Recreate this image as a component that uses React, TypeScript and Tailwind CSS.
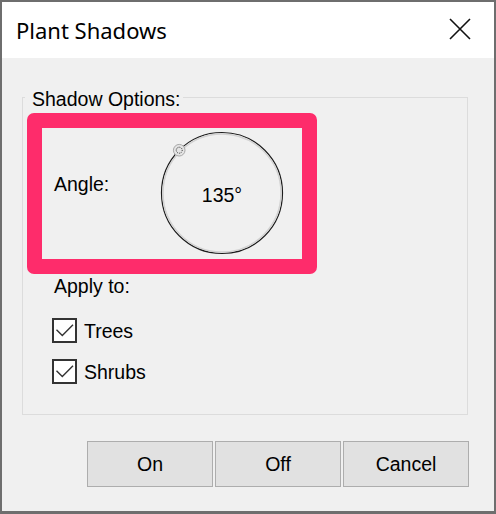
import { useState } from 'react';

const Check = () => (
  <svg width="21" height="21" viewBox="0 0 21 21" fill="none">
    <polyline points="2.5,9.8 8.3,15.4 19,4.8" stroke="#333333" strokeWidth="1.4" />
  </svg>
);

const AngleDial = ({ angle }: { angle: number }) => {
  const rad = (angle * Math.PI) / 180;
  const hx = 65 + 60.5 * Math.cos(rad);
  const hy = 65 - 60.5 * Math.sin(rad);

  return (
    <div className="relative w-[130px] h-[130px] flex items-center justify-center">
      <svg className="absolute inset-0" width="130" height="130" viewBox="0 0 130 130" fill="none">
        <circle cx="65" cy="65" r="60.5" stroke="#1c1c1c" strokeWidth="1.2" />
        <circle cx="65" cy="65" r="59" stroke="#d2d2d2" strokeWidth="1.5" />
        <circle cx={hx} cy={hy} r="5.8" fill="#e4e4e4" stroke="#a8a8a8" strokeWidth="1" />
        <circle cx={hx} cy={hy} r="3" stroke="#222" strokeWidth="1" strokeDasharray="0.9 1.1" />
      </svg>
      <span className="relative pt-[4px] leading-[22px]">{angle}°</span>
    </div>
  );
};

export default function App() {
  const [trees, setTrees] = useState(true);
  const [shrubs, setShrubs] = useState(true);

  return (
    <div
      className="w-[496px] h-[514px] flex flex-col border-l-2 border-t-2 border-r-2 border-b-[3px] border-[#6e6e6e] text-black"
      style={{ fontFamily: '"Liberation Sans", Arial, sans-serif' }}
    >
      {/* title bar */}
      <div className="h-[56px] bg-white flex items-center justify-between pl-[14px]">
        <span className="text-[22px] leading-[30px] -mt-[1px]" style={{ fontFamily: '"Noto Sans", sans-serif' }}>
          Plant Shadows
        </span>
        <svg className="mr-[23px] -mt-[3px]" width="22" height="22" viewBox="0 0 22 22" fill="none">
          <path d="M1 1L21 21M21 1L1 21" stroke="#111" strokeWidth="1.6" />
        </svg>
      </div>

      <div className="flex-1 bg-[#f0f0f0] flex flex-col text-[19.5px]">
        <fieldset className="ml-[20px] mt-[27px] w-[446px] h-[330px] border border-[#dcdcdc]">
          <legend className="ml-[2px] pl-[7px] pr-[2px] pt-[3px] leading-[22px]">Shadow Options:</legend>

          <div className="ml-[4px] mt-[3px] w-[290px] h-[161px] border-[15px] border-[#fe2c6b] rounded-[7px] flex">
            <div className="w-[115px] pl-[12px] pt-[45px] leading-[22px]">Angle:</div>
            <AngleDial angle={135} />
          </div>

          <div className="ml-[31px] mt-[1px] leading-[22px]">Apply to:</div>

          <div className="ml-[29px] mt-[21px] flex flex-col gap-[16px]">
            <label className="flex items-center gap-[7px] cursor-default" onClick={() => setTrees(!trees)}>
              <span className="w-[25px] h-[25px] border-2 border-[#333333] bg-white flex items-center justify-center">
                {trees && <Check />}
              </span>
              <span className="leading-[22px]">Trees</span>
            </label>
            <label className="flex items-center gap-[7px] cursor-default" onClick={() => setShrubs(!shrubs)}>
              <span className="w-[25px] h-[25px] border-2 border-[#333333] bg-white flex items-center justify-center">
                {shrubs && <Check />}
              </span>
              <span className="leading-[22px]">Shrubs</span>
            </label>
          </div>
        </fieldset>

        <div className="mt-[26px] pr-[25px] flex justify-end gap-[2px]">
          {['On', 'Off', 'Cancel'].map((label) => (
            <button
              key={label}
              className="w-[126px] h-[46px] border border-[#adadad] bg-[#e1e1e1] leading-[22px]"
            >
              {label}
            </button>
          ))}
        </div>
      </div>
    </div>
  );
}
